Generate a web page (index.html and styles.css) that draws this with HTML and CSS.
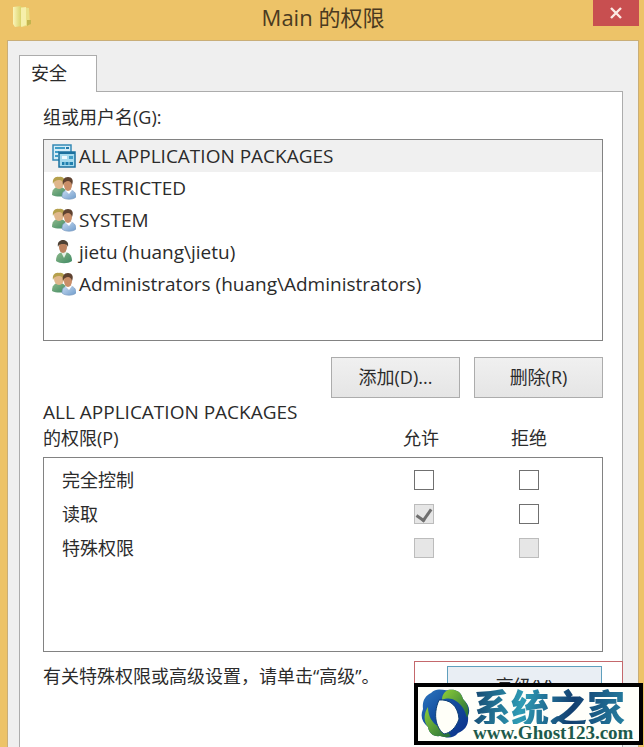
FILE: index.html
```html
<!DOCTYPE html>
<html lang="zh-CN">
<head>
  <meta charset="UTF-8" />
  <meta name="viewport" content="width=device-width, initial-scale=1.0"/>
  <title>Main 的权限</title>
  <link rel="stylesheet" href="styles.css">
</head>
<body>

<!-- Shared icons -->
<svg class="sprite" aria-hidden="true">
  <defs>
    <linearGradient id="greenBody" x1="0" y1="0" x2="1" y2="1">
      <stop offset="0" stop-color="#8fb98b"/>
      <stop offset="1" stop-color="#3f8a63"/>
    </linearGradient>
    <linearGradient id="blueBody" x1="0" y1="0" x2="1" y2="1">
      <stop offset="0" stop-color="#c9dcf2"/>
      <stop offset="1" stop-color="#6f9ccb"/>
    </linearGradient>
    <linearGradient id="folderFill" x1="0" y1="0" x2="1" y2="0">
      <stop offset="0" stop-color="#fbf5b8"/>
      <stop offset="1" stop-color="#d6cf62"/>
    </linearGradient>
  </defs>
  <symbol id="icon-group" viewBox="0 0 24 24">
    <path d="M0 19c0-5 2-8 7-8s8 3 8 8c-4 2-11 2-15 0z" fill="url(#greenBody)"/>
    <ellipse cx="7" cy="7" rx="5" ry="6" fill="#e0b78c"/>
    <path d="M1 8C0 3 3 0 7 1c5-1 7 3 5 8-1-4-3-5-5-5-3 0-5 1-6 4z" fill="#b5a04c"/>
    <path d="M10 21c0-5 2-7 7-7s7 3 7 7c-3 3-11 3-14 0z" fill="url(#blueBody)" stroke="#7898bd" stroke-width=".6"/>
    <path d="M13 14l4 4 3-4z" fill="#fff"/>
    <ellipse cx="16" cy="9" rx="4" ry="6" fill="#c98e68"/>
    <path d="M11 9c-1-5 1-8 5-8s6 3 4 8c-1-3-2-4-4-4s-4 1-5 4z" fill="#5f4230"/>
  </symbol>
  <symbol id="icon-user" viewBox="0 0 24 24">
    <path d="M4 21c0-6 3-9 8-9s8 3 8 9c-4 3-12 3-16 0z" fill="url(#greenBody)"/>
    <path d="M9 12l3 6 3-6z" fill="#e6f0e4"/>
    <ellipse cx="11" cy="7" rx="4" ry="6" fill="#bd825f"/>
    <path d="M6 7c-1-5 2-7 5-7s6 2 5 7c-1-3-3-3-5-3s-4 0-5 3z" fill="#4d4034"/>
  </symbol>
  <symbol id="icon-packages" viewBox="0 0 24 24">
    <rect x="1" y="1" width="18" height="15" fill="#d5edf7" stroke="#3489b5" stroke-width="1.5"/>
    <path d="M3 4h10M3 8h4M3 12h3" stroke="#3f9dc7" stroke-width="2"/>
    <path d="M14 4h3" stroke="#2579a8" stroke-width="2"/>
    <rect x="7" y="8" width="16" height="15" fill="#a6dbee" stroke="#1c719f" stroke-width="1.5"/>
    <path d="M7 9h16" stroke="#1c719f" stroke-width="2"/>
    <path d="M10 12h5v3h-5z" fill="#eefaff"/>
    <path d="M17 12h4v3h-4z" fill="#3f9dc7"/>
    <path d="M10 18h11v3H10z" fill="#1f7fae"/>
    <path d="M13 18v3M17 18v3" stroke="#a6dbee" stroke-width="1"/>
  </symbol>
</svg>

<div class="window">
  <header class="title-bar">
    <svg class="folder" viewBox="0 0 20 22" aria-hidden="true">
      <path d="M0 1l8-1 1 20-7 1-2-3z" fill="url(#folderFill)"/>
      <path d="M8 1l8 1 1 17-8 2z" fill="#eadf86"/>
      <path d="M8 2l5-1v18l-5 2z" fill="#f6efaa"/>
      <path d="M14 14h4v4l-4 2z" fill="#c3b44e"/>
    </svg>
    <h1>Main 的权限</h1>
    <button class="close" aria-label="关闭">
      <svg viewBox="0 0 12 12" aria-hidden="true"><path d="M1 1l10 10M11 1L1 11" stroke="#fbe9e4" stroke-width="2.4"/></svg>
    </button>
  </header>

  <main class="content">
    <div class="tabs">
      <button class="tab">安全</button>
    </div>

    <section class="pane">
      <h2 class="label" id="groupLabel">组或用户名(G):</h2>
      <ul class="users" aria-labelledby="groupLabel">
        <li class="selected"><svg><use href="#icon-packages"/></svg>ALL APPLICATION PACKAGES</li>
        <li><svg><use href="#icon-group"/></svg>RESTRICTED</li>
        <li><svg><use href="#icon-group"/></svg>SYSTEM</li>
        <li><svg><use href="#icon-user"/></svg>jietu (huang\jietu)</li>
        <li><svg><use href="#icon-group"/></svg>Administrators (huang\Administrators)</li>
      </ul>

      <div class="actions">
        <button class="btn">添加(D)...</button>
        <button class="btn">删除(R)</button>
      </div>

      <div class="perm-head">
        <h2 id="permLabel"><span class="account">ALL APPLICATION PACKAGES</span>的权限(P)</h2>
        <span>允许</span>
        <span>拒绝</span>
      </div>
      <div class="perm-box">
        <table aria-labelledby="permLabel">
          <tr>
            <th scope="row">完全控制</th>
            <td><input type="checkbox" aria-label="允许完全控制"></td>
            <td><input type="checkbox" aria-label="拒绝完全控制"></td>
          </tr>
          <tr>
            <th scope="row">读取</th>
            <td><input type="checkbox" aria-label="允许读取" checked disabled></td>
            <td><input type="checkbox" aria-label="拒绝读取"></td>
          </tr>
          <tr>
            <th scope="row">特殊权限</th>
            <td><input type="checkbox" aria-label="允许特殊权限" disabled></td>
            <td><input type="checkbox" aria-label="拒绝特殊权限" disabled></td>
          </tr>
        </table>
      </div>

      <div class="advanced">
        <p>有关特殊权限或高级设置，请单击“高级”。</p>
        <div class="highlight">
          <button class="btn focused">高级(V)</button>
        </div>
      </div>
    </section>
  </main>

  <div class="watermark">
    <svg viewBox="0 0 50 54" aria-hidden="true">
      <defs>
        <linearGradient id="ringBlue" x1="0" y1="0" x2="1" y2="1">
          <stop offset="0" stop-color="#2f78c0"/>
          <stop offset=".4" stop-color="#1450a0"/>
          <stop offset="1" stop-color="#0c2f88"/>
        </linearGradient>
        <linearGradient id="ringGreen" x1="0" y1="0" x2="1" y2="1">
          <stop offset="0" stop-color="#8fcf38"/>
          <stop offset="1" stop-color="#1f6a3a"/>
        </linearGradient>
      </defs>
      <path d="M10 6C16 0 22 4 27 3c7-1 13 1 15 9 5 5 8 10 5 17 1 9-3 14-10 17-5 6-11 5-17 3C12 50 8 46 7 40 1 35-1 29 2 22 1 14 4 9 10 6z" fill="url(#ringBlue)"/>
      <path d="M27 3c7-1 13 1 15 9 5 5 7 12 4 19-2-8-5-13-11-17-5-3-9-3-14-1 0-5 2-8 6-10z" fill="url(#ringGreen)"/>
      <path d="M7 20c0 9 4 16 11 20 5 3 9 5 12 9-4 2-8 1-11 0-7 1-11-3-12-9C2 34 3 26 7 20z" fill="url(#ringGreen)"/>
      <path d="M18 13c10-1 19 5 20 19-3 9-9 14-15 15-7-5-12-18-5-34z" fill="#fffff8" stroke="#0d3f75" stroke-width="1"/>
    </svg>
    <div class="brand">
      <strong>系统之家</strong>
      <span>www.Ghost123.com</span>
    </div>
  </div>
</div>

</body>
</html>
```
FILE: styles.css
```css
* {
  box-sizing: border-box;
}

body {
  margin: 0;
  font-family: "Open Sans", "Noto Sans CJK SC", sans-serif;
  font-size: 18px;
  color: #2b2b2b;
  background-color: #edc368;
}

h1, h2, p, ul {
  margin: 0;
  padding: 0;
  font-size: 18px;
  font-weight: normal;
}

button {
  font-family: inherit;
  font-size: 18px;
  color: #2b2b2b;
  padding: 0;
}

.sprite {
  position: absolute;
  width: 0;
  height: 0;
}

.window {
  position: relative;
  display: flex;
  flex-direction: column;
  min-height: 100vh;
  padding: 0 5px 0 7px;
  overflow: hidden;
}

/* Title bar */
.title-bar {
  display: grid;
  grid-template-columns: 46px 1fr 46px;
  height: 40px;
}

.folder {
  width: 20px;
  height: 22px;
  margin: 6px 0 0 6px;
}

.title-bar h1 {
  font-size: 22px;
  line-height: 34px;
  text-align: center;
  color: #4a3a20;
}

.close {
  display: flex;
  align-items: center;
  justify-content: center;
  height: 26px;
  border: none;
  background-color: #c84f50;
}

.close svg {
  width: 12px;
  height: 12px;
}

/* Tab and pane */
.content {
  flex: 1;
  display: flex;
  flex-direction: column;
  padding: 14px 15px 0 11px;
  background-color: #efefef;
  border: 1px solid #c9ae78;
  border-bottom: none;
}

.tabs {
  display: flex;
}

.tab {
  width: 78px;
  height: 37px;
  margin-bottom: -1px;
  padding: 0 18px 4px 0;
  background-color: #fff;
  border: 1px solid #acacac;
  border-bottom: none;
  z-index: 1;
}

.pane {
  flex: 1;
  padding: 13px 19px 0 23px;
  background-color: #fff;
  border: 1px solid #acacac;
  border-bottom: none;
}

.label {
  line-height: 24px;
  margin-bottom: 10px;
}

.users {
  height: 202px;
  border: 1px solid #828282;
  list-style: none;
  font-size: 19px;
}

.users li {
  display: flex;
  align-items: center;
  gap: 3px;
  height: 32px;
  padding-left: 8px;
}

.users .selected {
  background-color: #f0f0f0;
}

.users svg {
  width: 24px;
  height: 24px;
}

.actions {
  display: flex;
  justify-content: flex-end;
  gap: 14px;
  margin: 16px 0 1px;
}

.btn {
  width: 129px;
  height: 41px;
  padding-bottom: 4px;
  background: linear-gradient(#f0f0f0, #e5e5e5);
  border: 1px solid #acacac;
}

/* Permissions */
.perm-head {
  display: grid;
  grid-template-columns: 1fr 108px 108px;
  align-items: end;
  padding-right: 20px;
  margin-bottom: 6px;
  line-height: 26px;
}

.perm-head span {
  text-align: center;
}

.perm-head .account {
  display: block;
  font-size: 19px;
  text-align: left;
}

.perm-box {
  height: 195px;
  padding: 5px 21px 0 18px;
  border: 1px solid #828282;
}

.perm-box table {
  width: 100%;
  border-collapse: collapse;
}

.perm-box tr {
  height: 34px;
}

.perm-box th {
  padding: 0;
  font-weight: normal;
  text-align: left;
  line-height: 24px;
}

.perm-box td {
  width: 105px;
  padding: 0;
  text-align: center;
}

input[type="checkbox"] {
  appearance: none;
  display: block;
  width: 20px;
  height: 20px;
  margin: 0 auto;
  background-color: #fff;
  border: 1px solid #707070;
}

input[type="checkbox"]:disabled {
  background-color: #e6e6e6;
  border-color: #bcbcbc;
}

input[type="checkbox"]:checked::after {
  content: "";
  display: block;
  width: 7px;
  height: 12px;
  margin: 1px auto;
  border: solid #707070;
  border-width: 0 3px 3px 0;
  transform: rotate(35deg);
}

.advanced {
  display: flex;
  justify-content: space-between;
  align-items: flex-start;
  margin: 9px -20px 0 0;
}

.advanced p {
  line-height: 30px;
  white-space: nowrap;
}

.highlight {
  padding: 4px 20px 4px 32px;
  border: 1px solid #c4686c;
}

.focused {
  display: block;
  width: 155px;
  background: #e9eef4;
  border-color: #5f9fbd;
}

/* Site badge over the corner */
.watermark {
  position: absolute;
  right: 1px;
  bottom: 2px;
  display: flex;
  align-items: center;
  gap: 2px;
  width: 229px;
  height: 62px;
  padding-left: 3px;
  background-color: #fffffa;
  border: 4px solid #000;
}

.watermark svg {
  width: 50px;
  height: 54px;
  flex: none;
}

.brand {
  flex: 1;
}

.brand strong {
  display: block;
  font-family: "Noto Sans CJK SC", sans-serif;
  font-size: 38px;
  font-weight: 900;
  line-height: 37px;
  color: transparent;
  background: linear-gradient(100deg, #15456e, #2f9cb5 30%, #123f70 60%, #2b91ae);
  -webkit-background-clip: text;
  background-clip: text;
}

.brand span {
  display: block;
  font-family: "Liberation Serif", serif;
  font-size: 19px;
  font-weight: bold;
  line-height: 17px;
  color: #1d5a4c;
}
```
